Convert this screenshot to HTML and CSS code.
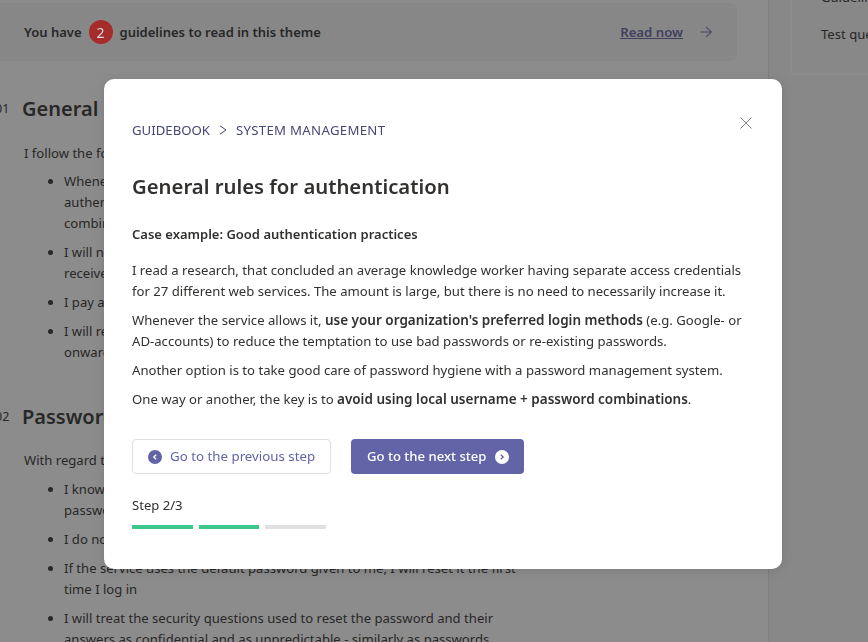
FILE: index.html
```html
<!DOCTYPE html>
<html lang="en">
<head>
<meta charset="utf-8">
<title>General rules for authentication</title>
<link rel="stylesheet" href="styles.css">
</head>
<body>
<div class="page">
  <main class="main">
    <div class="banner">
      <div class="banner-msg"><b>You have</b><span class="badge">2</span><b>guidelines to read in this theme</b></div>
      <div class="banner-link"><a href="#">Read now</a>
        <svg class="arrow" width="12" height="12" viewBox="0 0 14 14" fill="none" stroke="currentColor" stroke-width="1.200"><path d="M.5 7h12.500M7 1l6.200 6L7 13"/></svg>
      </div>
    </div>
    <section class="rule">
      <h2><span class="num">01</span>General rules for authentication</h2>
      <p>I follow the following rules for authentication:</p>
      <ul>
        <li>Whenever the service allows it, I will use my organization's preferred authentication methods instead of local username and password combinations</li>
        <li>I will not share or forward the one-time authentication codes that I may receive with anyone else at all</li>
        <li>I pay attention to suspicious login prompts</li>
        <li>I will report all suspected problems related to authentication methods<br>onwards immediately</li>
      </ul>
    </section>
    <section class="rule">
      <h2><span class="num">02</span>Password management</h2>
      <p>With regard to passwords, I follow these rules:</p>
      <ul>
        <li>I know how to create a strong password and I will always use a different password for each service I use</li>
        <li>I do not share my passwords with anyone</li>
        <li>If the service uses the default password given to me, I will reset it the first time I log in</li>
        <li>I will treat the security questions used to reset the password and their answers as confidential and as unpredictable - similarly as passwords</li>
      </ul>
    </section>
  </main>
  <aside class="side">
    <div class="side-card">
      <div>Guidelines</div>
      <div>Test questions</div>
    </div>
  </aside>
</div>
<div class="overlay"></div>
<div class="modal" role="dialog">
  <svg class="close" width="12" height="12" viewBox="0 0 12 12" fill="none" stroke="currentColor" stroke-width="1"><path d="M.5.5l11 11M11.500.5l-11 11"/></svg>
  <div class="crumbs"><span>GUIDEBOOK</span>
    <svg width="8" height="10" viewBox="0 0 8 10" fill="none" stroke="currentColor" stroke-width="1"><path d="M1 .8 7 5 1 9.200"/></svg>
    <span class="crumb-last">SYSTEM MANAGEMENT</span></div>
  <h1>General rules for authentication</h1>
  <h3>Case example: Good authentication practices</h3>
  <div class="body">
    <p>I read a research, that concluded an average knowledge worker having separate access credentials for 27 different web services. The amount is large, but there is no need to necessarily increase it.</p>
    <p>Whenever the service allows it, <b>use your organization's preferred login methods</b> (e.g. Google- or AD-accounts) to reduce the temptation to use bad passwords or re-existing passwords.</p>
    <p>Another option is to take good care of password hygiene with a password management system.</p>
    <p>One way or another, the key is to <b>avoid using local username + password combinations</b>.</p>
  </div>
  <div class="actions">
    <button class="btn btn-prev">
      <svg width="14" height="14" viewBox="0 0 14 14"><circle cx="7" cy="7" r="7" fill="#6264a7"/><path d="M8.200 4.800 5.800 7l2.400 2.200" fill="none" stroke="#fff" stroke-width="1.300"/></svg>
      Go to the previous step</button>
    <button class="btn btn-next">Go to the next step
      <svg width="14" height="14" viewBox="0 0 14 14"><circle cx="7" cy="7" r="7" fill="#fff"/><path d="M5.800 4.800 8.200 7 5.800 9.200" fill="none" stroke="#6264a7" stroke-width="1.300"/></svg>
    </button>
  </div>
  <div class="step">Step 2/3</div>
  <div class="progress"><span class="seg done"></span><span class="seg done mid"></span><span class="seg"></span></div>
</div>
</body>
</html>
```
FILE: styles.css
```css
* { box-sizing: border-box; }
html, body { margin: 0; height: 100%; overflow: hidden; }
body {
  font-family: "Noto Sans", "Open Sans", sans-serif;
  font-size: 13.100px;
  line-height: 21px;
  color: #252423;
  background: #f6f6f6;
}
.page { display: flex; height: 642px; overflow: hidden; }
.main { width: 769px; flex: none; padding-top: 3px; background: #fff; border-right: 1px solid #e2e2ee; }
.banner {
  width: 737px; height: 58px;
  background: #f3f4f6;
  border-radius: 0 6px 6px 0;
  display: flex; align-items: center; justify-content: space-between;
  padding: 0 25px 0 24px;
}
.banner-msg { display: flex; align-items: center; font-size: 13px; }
.banner-msg b { font-weight: 600; }
.badge {
  position: relative; z-index: 1;
  width: 24px; height: 24px; border-radius: 50%;
  background: #a62b2b; color: #dcdcdc;
  display: flex; align-items: center; justify-content: center;
  margin: 0 7px; font-size: 14px;
}
.banner-link { display: flex; align-items: center; gap: 17px; color: #5a5c98; }
.banner-link a { color: inherit; font-weight: 600; font-size: 13.200px; }
.arrow { color: #6264a7; }
.rule { position: relative; padding: 0 238px 0 24px; }
.rule:first-of-type { margin-top: 33px; }
.rule + .rule { margin-top: 39px; }
.rule h2 { position: relative; margin: 0 0 19px -2px; font-size: 20px; line-height: 30px; font-weight: 600; white-space: nowrap; }
.rule + .rule h2 { margin-bottom: 18px; }
.num { position: absolute; left: -27px; top: 4px; font-size: 12.500px; font-weight: 400; line-height: 22px; }
.rule p { margin: 0; }
.rule ul { margin: 7px 0 0; padding-left: 40px; }
.rule + .rule ul { margin-top: 8px; }
.rule li { margin-bottom: 8px; }
.side { flex: 1; }
.side-card {
  margin: -39px 0 0 21px; height: 114px; width: 140px;
  border: 2px solid #fff; border-radius: 4px; padding: 24px 0 0 29px;
  display: flex; flex-direction: column; gap: 16px; white-space: nowrap;
}
.overlay { position: fixed; inset: 0; background: rgba(42,42,42,.54); }
.modal {
  position: fixed; z-index: 2; left: 104px; top: 79px; width: 678px; height: 490px;
  background: #fff; border-radius: 10px;
  padding: 41px 28px 0;
  color: #323130;
  box-shadow: 0 2px 12px rgba(0,0,0,.12);
}
.close { position: absolute; left: 636px; top: 38px; color: #8a8886; }
.crumbs { display: flex; align-items: center; gap: 9px; color: #464775; font-size: 13.200px; line-height: 20px; }
.crumb-last { letter-spacing: .3px; }
.modal h1 { margin: 30px 0 0; font-size: 20.300px; line-height: 33px; font-weight: 600; }
.modal h3 { margin: 21px 0 0; font-size: 13px; line-height: 21px; font-weight: 600; }
.body { margin-top: 15px; font-size: 13.150px; }
.body p { margin: 0 0 8px; }
.body b { font-weight: 600; font-size: 13.500px; }
.actions { display: flex; gap: 20px; margin-top: 29px; }
.btn {
  height: 35px; border-radius: 4px; font: inherit;
  display: flex; align-items: center; gap: 8px; cursor: pointer; white-space: nowrap;
}
.btn svg { flex: none; }
.btn-prev { width: 199px; background: #fff; border: 1px solid #e1dfdd; color: #6264a7; padding: 0 15px; font-size: 13.300px; }
.btn-next { width: 173px; background: #6264a7; border: 0; color: #fff; padding: 0 16px; font-weight: 500; }
.step { margin-top: 20px; line-height: 22px; }
.progress { display: flex; gap: 6px; margin-top: 9px; }
.seg { width: 61px; height: 4px; background: #e1e1e1; }
.seg.done { background: #3cc88a; }
.seg.mid { width: 60px; }
```
